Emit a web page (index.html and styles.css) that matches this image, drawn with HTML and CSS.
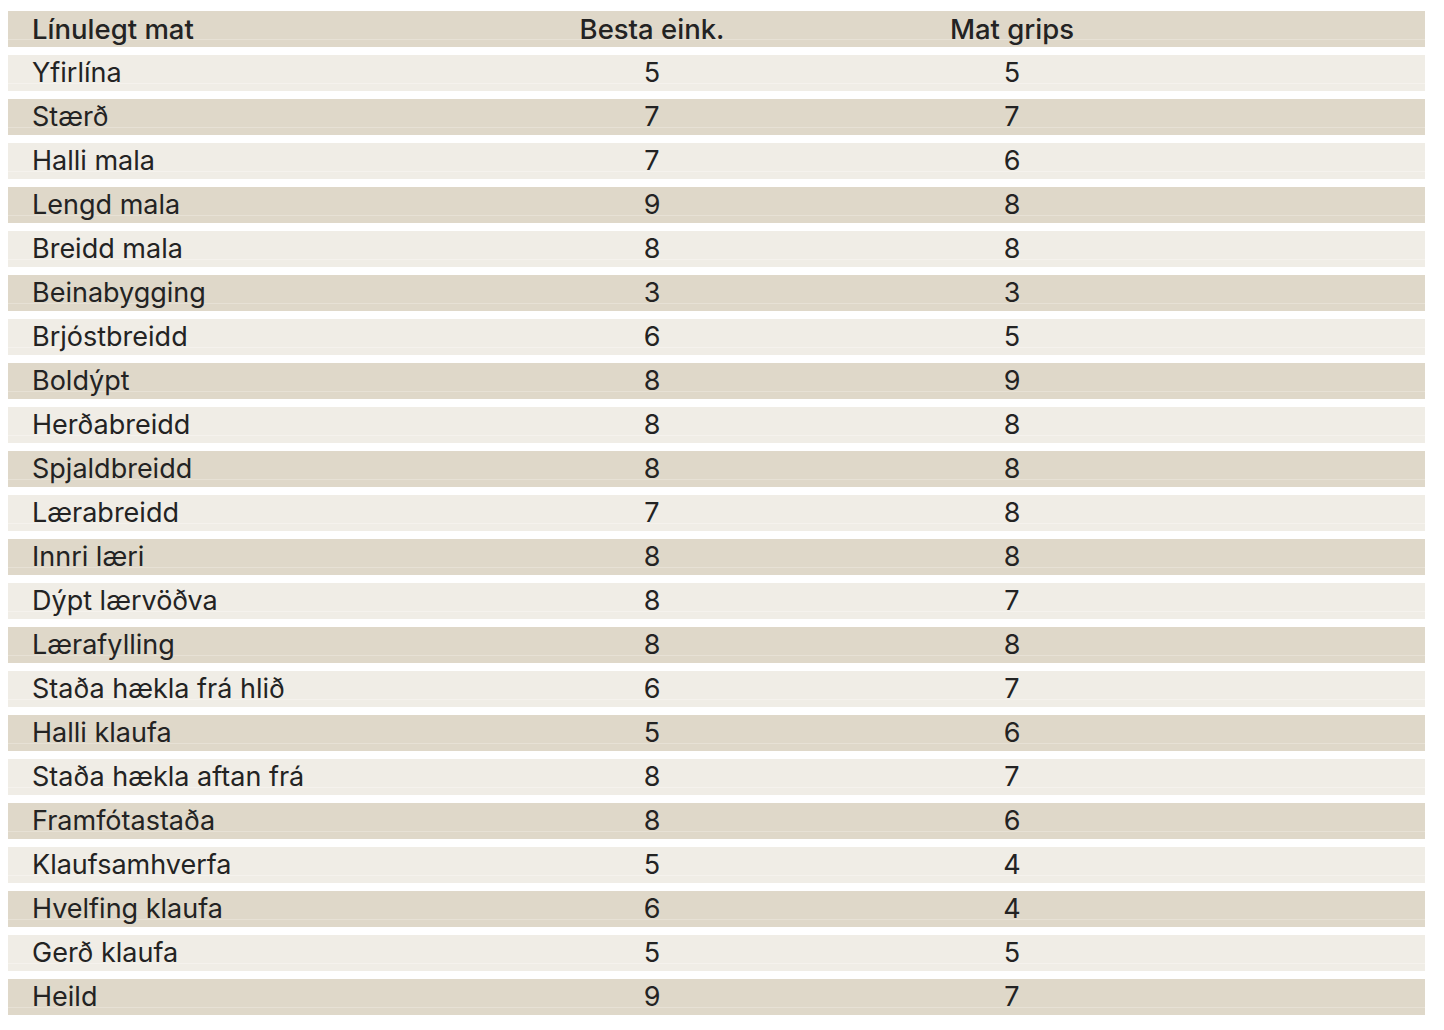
FILE: index.html
```html
<!DOCTYPE html>
<html lang="is">
<head>
<meta charset="utf-8">
<title>Línulegt mat</title>
<link rel="stylesheet" href="styles.css">
</head>
<body>
<div class="table">
  <div class="row dark head"><span class="name">Línulegt mat</span><span class="num">Besta eink.</span><span class="num">Mat grips</span></div>
  <div class="row light"><span class="name">Yfirlína</span><span class="num">5</span><span class="num">5</span></div>
  <div class="row dark"><span class="name">Stærð</span><span class="num">7</span><span class="num">7</span></div>
  <div class="row light"><span class="name">Halli mala</span><span class="num">7</span><span class="num">6</span></div>
  <div class="row dark"><span class="name">Lengd mala</span><span class="num">9</span><span class="num">8</span></div>
  <div class="row light"><span class="name">Breidd mala</span><span class="num">8</span><span class="num">8</span></div>
  <div class="row dark"><span class="name">Beinabygging</span><span class="num">3</span><span class="num">3</span></div>
  <div class="row light"><span class="name">Brjóstbreidd</span><span class="num">6</span><span class="num">5</span></div>
  <div class="row dark"><span class="name">Boldýpt</span><span class="num">8</span><span class="num">9</span></div>
  <div class="row light"><span class="name">Herðabreidd</span><span class="num">8</span><span class="num">8</span></div>
  <div class="row dark"><span class="name">Spjaldbreidd</span><span class="num">8</span><span class="num">8</span></div>
  <div class="row light"><span class="name">Lærabreidd</span><span class="num">7</span><span class="num">8</span></div>
  <div class="row dark"><span class="name">Innri læri</span><span class="num">8</span><span class="num">8</span></div>
  <div class="row light"><span class="name">Dýpt lærvöðva</span><span class="num">8</span><span class="num">7</span></div>
  <div class="row dark"><span class="name">Lærafylling</span><span class="num">8</span><span class="num">8</span></div>
  <div class="row light"><span class="name">Staða hækla frá hlið</span><span class="num">6</span><span class="num">7</span></div>
  <div class="row dark"><span class="name">Halli klaufa</span><span class="num">5</span><span class="num">6</span></div>
  <div class="row light"><span class="name">Staða hækla aftan frá</span><span class="num">8</span><span class="num">7</span></div>
  <div class="row dark"><span class="name">Framfótastaða</span><span class="num">8</span><span class="num">6</span></div>
  <div class="row light"><span class="name">Klaufsamhverfa</span><span class="num">5</span><span class="num">4</span></div>
  <div class="row dark"><span class="name">Hvelfing klaufa</span><span class="num">6</span><span class="num">4</span></div>
  <div class="row light"><span class="name">Gerð klaufa</span><span class="num">5</span><span class="num">5</span></div>
  <div class="row dark"><span class="name">Heild</span><span class="num">9</span><span class="num">7</span></div>
</div>
</body>
</html>
```
FILE: styles.css
```css
html, body {
  margin: 0;
  padding: 0;
  background: #ffffff;
}

body {
  font-family: Inter, "Liberation Sans", sans-serif;
  color: #232323;
}

.table {
  display: flex;
  flex-direction: column;
  gap: 8px;
  padding: 11px 0 0 8px;
  width: 1417px;
}

.row {
  display: grid;
  grid-template-columns: 464px 360px 360px 1fr;
  height: 36px;
  line-height: 36px;
  font-size: 27px;
}

.dark {
  background: linear-gradient(to bottom, #dfd8c9 0, #dfd8c9 28px, #e7e1d5 28px, #e7e1d5 29px, #dfd8c9 29px);
}

.light {
  background: linear-gradient(to bottom, #f0ede6 0, #f0ede6 28px, #f5f2ed 28px, #f5f2ed 29px, #f0ede6 29px);
}

.head {
  font-weight: 500;
  font-size: 27.5px;
}

.name {
  padding-left: 24px;
  white-space: nowrap;
}

.num {
  text-align: center;
  white-space: nowrap;
}
```
